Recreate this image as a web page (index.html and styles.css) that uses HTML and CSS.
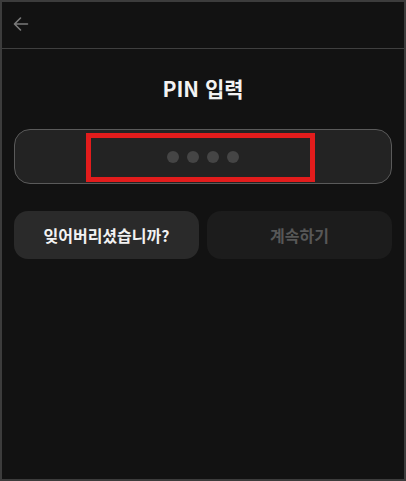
FILE: index.html
```html
<!DOCTYPE html>
<html lang="ko">
<head>
<meta charset="utf-8">
<title>PIN 입력</title>
<link rel="stylesheet" href="styles.css">
</head>
<body>
<div class="app">
  <header class="header">
    <button class="back" aria-label="뒤로">
      <svg width="16" height="16" viewBox="0 0 16 16" fill="none" stroke="currentColor" stroke-width="1.6" stroke-linecap="round" stroke-linejoin="round">
        <path d="M14.5 8H1.8M7.5 2L1.5 8l6 6"/>
      </svg>
    </button>
  </header>
  <main class="content">
    <h1 class="title">PIN 입력</h1>
    <div class="pin-box">
      <div class="dots">
        <span class="dot"></span><span class="dot"></span><span class="dot"></span><span class="dot"></span>
      </div>
      <div class="highlight"></div>
    </div>
    <div class="actions">
      <button class="btn btn-secondary">잊어버리셨습니까?</button>
      <button class="btn btn-disabled" disabled>계속하기</button>
    </div>
  </main>
</div>
</body>
</html>
```

FILE: styles.css
```css
* { box-sizing: border-box; }
html, body { margin: 0; padding: 0; background: #121212; }
body { font-family: "Noto Sans CJK KR", "Noto Sans", sans-serif; }
.app {
  width: 406px;
  height: 481px;
  border: 2px solid #3c3c3c;
  background: #121212;
  display: flex;
  flex-direction: column;
}
.header {
  height: 47px;
  border-bottom: 1px solid #3f3f3f;
  display: flex;
  align-items: flex-start;
  padding: 14px 0 0 11px;
  flex: none;
}
.back {
  background: none;
  border: 0;
  padding: 0;
  width: 16px;
  height: 16px;
  color: #7a7a7a;
  display: flex;
}
.content {
  padding: 0 12px;
  display: flex;
  flex-direction: column;
}
.title {
  margin: 25px 0 27px;
  text-align: center;
  font-size: 21px;
  line-height: 28px;
  font-weight: 700;
  color: #f2f2f2;
}
.pin-box {
  position: relative;
  height: 55px;
  border: 1px solid #5a5a5a;
  border-radius: 16px;
  background: #232323;
  display: flex;
  align-items: center;
  justify-content: center;
}
.dots { display: flex; gap: 8px; }
.dot {
  width: 12px;
  height: 12px;
  border-radius: 50%;
  background: #454545;
}
.highlight {
  position: absolute;
  left: 71px;
  top: 3px;
  width: 229px;
  height: 49px;
  border: 5px solid #e21c1c;
}
.actions {
  margin-top: 27px;
  display: grid;
  grid-template-columns: 1fr 1fr;
  gap: 8px;
}
.btn {
  height: 48px;
  border: 0;
  border-radius: 14px;
  font-family: inherit;
  font-size: 16px;
  font-weight: 700;
  padding: 0;
}
.btn-secondary { background: #2a2a2a; color: #f2f2f2; }
.btn-disabled { background: #1c1c1c; color: #575757; }
```
